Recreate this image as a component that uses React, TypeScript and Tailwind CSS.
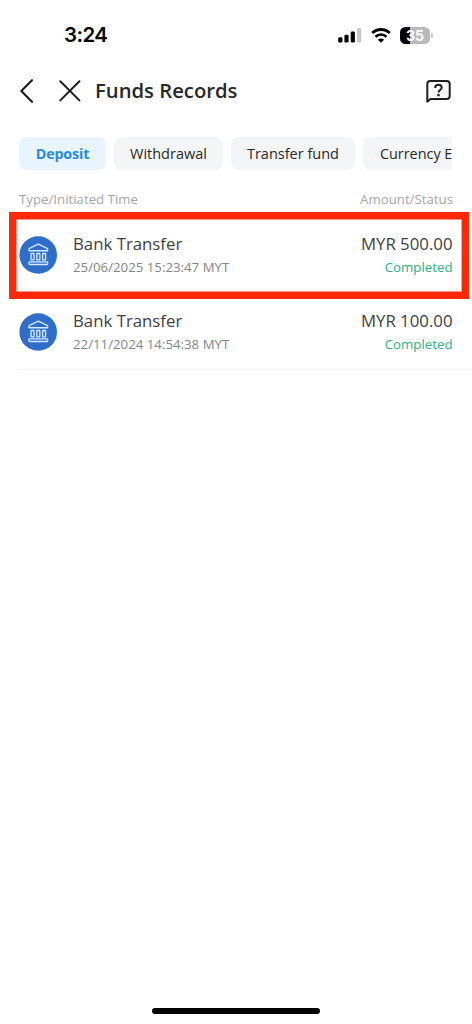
const tabs = ["Withdrawal", "Transfer fund"];

const records = [
  { time: "25/06/2025 15:23:47 MYT", amount: "MYR 500.00", highlighted: true },
  { time: "22/11/2024 14:54:38 MYT", amount: "MYR 100.00", highlighted: false },
];

function StatusBar() {
  return (
    <div className="flex h-[70px] items-center justify-between pr-[39px] pl-16 text-black">
      <span className="font-[Inter] text-[20.5px] font-semibold tracking-[-0.6px]">3:24</span>
      <div className="flex items-center">
        <svg width="24" height="16" viewBox="0 0 24 16" className="mr-[9px]">
          <rect x="0.2" y="10.2" width="4.2" height="5.3" rx="1.3" />
          <rect x="6.4" y="7.8" width="4.2" height="7.7" rx="1.3" />
          <rect x="12.7" y="4.5" width="4.2" height="11" rx="1.3" />
          <rect x="19" y="1" width="4.2" height="14.5" rx="1.3" fill="#c9c9c9" />
        </svg>
        <svg width="20" height="15" viewBox="0 0 20 15" className="mr-[9px]">
          <path d="M1.2 5.1a12.6 12.6 0 0 1 17.6 0" fill="none" stroke="black" strokeWidth="2.8" />
          <path d="M4.5 8.7a7.9 7.9 0 0 1 11 0" fill="none" stroke="black" strokeWidth="2.6" />
          <path d="M10 14.8 6.9 11.7a4.4 4.4 0 0 1 6.2 0Z" />
        </svg>
        <div className="flex h-[17px] w-[30px] items-center justify-center rounded-[5.5px] bg-[linear-gradient(90deg,#000_35%,#b9b9b9_35%)] font-[Inter] text-[14px] font-bold text-white">
          35
        </div>
        <span className="ml-px h-[5px] w-[2px] rounded-r-full bg-[#c4c4c4]" />
      </div>
    </div>
  );
}

function Header() {
  return (
    <header className="flex h-[42px] items-center pr-[20px] pl-[19px]">
      <svg width="16" height="24" viewBox="0 0 16 24" fill="none" stroke="#1c1c1e" strokeWidth="2.1" strokeLinecap="round" strokeLinejoin="round">
        <path d="M13 1.2 2.3 12 13 22.8" />
      </svg>
      <svg width="22" height="22" viewBox="0 0 22 22" fill="none" stroke="#1c1c1e" strokeWidth="2" strokeLinecap="round" className="ml-[24px]">
        <path d="m1.3 1.3 19.1 19.1M20.4 1.3 1.3 20.4" />
      </svg>
      <h1 className="mb-[2px] ml-[14px] flex-1 text-[20.25px] leading-[28px] font-semibold text-[#28282a]">Funds Records</h1>
      <svg width="26" height="24" viewBox="0 0 26 24" fill="none" stroke="#202022" strokeWidth="2" strokeLinejoin="round">
        <path d="M1.3 22.7V5a3 3 0 0 1 3-3h16.4a3 3 0 0 1 3 3v12.1a3 3 0 0 1-3 3H4.4Z" />
        <path d="M9.2 8.9c0-2 1.4-3.1 3.2-3.1s3.3 1 3.3 2.9c0 2.1-3.2 2.5-3.2 4.7" />
        <circle cx="12.5" cy="16.1" r="1.35" fill="#202022" stroke="none" />
      </svg>
    </header>
  );
}

function BankIcon() {
  return (
    <svg width="38" height="38" viewBox="0 0 38 38" fill="none" stroke="#d3eaff" strokeWidth="1.35" strokeLinejoin="round" className="shrink-0">
      <circle cx="19.2" cy="19" r="18.8" fill="#2f6dca" stroke="none" />
      <path d="M10 14.7v-2L19.3 8.2l9.3 4.5v2Z" />
      <rect x="12" y="17.5" width="3" height="6.4" rx="0.5" />
      <rect x="17.8" y="17.5" width="3" height="6.4" rx="0.5" />
      <rect x="23.6" y="17.5" width="3" height="6.4" rx="0.5" />
      <rect x="10" y="25.8" width="18.6" height="2.7" rx="0.7" />
    </svg>
  );
}

export default function App() {
  return (
    <div className="relative flex h-[1024px] w-[472px] flex-col overflow-hidden bg-white font-['Open_Sans',sans-serif]">
      <StatusBar />
      <Header />
      <nav className="mt-[25px] mr-[19px] ml-[19px] flex h-[33px] gap-[8px] overflow-hidden text-[14.5px] whitespace-nowrap text-[#28282a]">
        <button className="w-[87px] shrink-0 rounded-[8px] bg-[#e8f4ff] text-[14.3px] font-bold tracking-[-0.15px] text-[#268bdc]">Deposit</button>
        {tabs.map((tab) => (
          <button key={tab} className="shrink-0 rounded-[8px] bg-[#f4f5f6] px-4">{tab}</button>
        ))}
        <button className="shrink-0 rounded-l-[8px] bg-[#f4f5f6] pl-[17px] text-[14.4px]">Currency E</button>
      </nav>
      <div className="mt-[20px] flex h-[20px] items-center justify-between px-[19px] text-[13.25px] text-[#a6a6a8]">
        <span>Type/Initiated Time</span>
        <span>Amount/Status</span>
      </div>
      <main className="mt-[6px] pl-[19px]">
        {records.map((record) => (
          <div key={record.time} className={record.highlighted ? "relative h-[77px]" : "h-[77px] border-b border-[#f1f1f2]"}>
            {record.highlighted && (
              <div className="pointer-events-none absolute top-[-4.5px] left-[-10px] h-[87.5px] w-[460px] shadow-[inset_0_0_0_7.4px_#fc2807]" />
            )}
            <div className="flex items-start pt-[16px] pr-[19.5px]">
              <div className="mt-[4px] flex"><BankIcon /></div>
              <div className="ml-4 flex-1">
                <p className="text-[16.8px] leading-[24px] text-[#404144]">Bank Transfer</p>
                <p className="text-[13.25px] leading-[22px] text-[#858689]">{record.time}</p>
              </div>
              <div className="text-right">
                <p className="text-[16.8px] leading-[24px] text-[#404144]">{record.amount}</p>
                <p className="text-[13.25px] leading-[22px] text-[#2cb187]">Completed</p>
              </div>
            </div>
          </div>
        ))}
      </main>
      <footer className="mt-auto flex justify-center pb-[10px]">
        <div className="h-[6px] w-[168px] rounded-full bg-black" />
      </footer>
    </div>
  );
}
